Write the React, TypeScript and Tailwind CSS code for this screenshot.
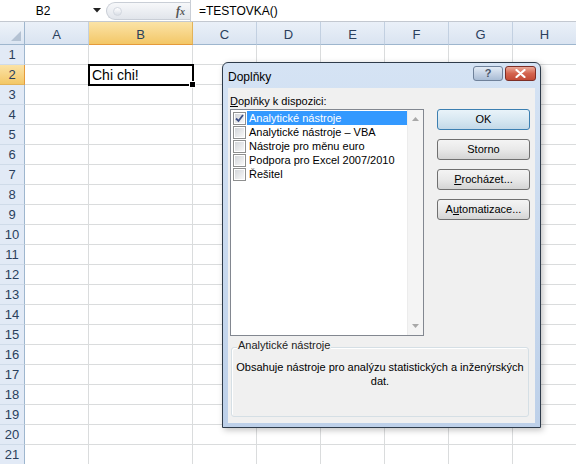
import React from "react";

const columns = [
  { name: "A", w: "w-[64px]" },
  { name: "B", w: "w-[104px]" },
  { name: "C", w: "w-[64px]" },
  { name: "D", w: "w-[64px]" },
  { name: "E", w: "w-[64px]" },
  { name: "F", w: "w-[64px]" },
  { name: "G", w: "w-[64px]" },
  { name: "H", w: "w-[64px]" },
];

const rows = Array.from({ length: 21 }, (_, i) => i + 1);

const addins = [
  { label: "Analytické nástroje", checked: true, selected: true },
  { label: "Analytické nástroje – VBA", checked: false, selected: false },
  { label: "Nástroje pro měnu euro", checked: false, selected: false },
  { label: "Podpora pro Excel 2007/2010", checked: false, selected: false },
  { label: "Řešitel", checked: false, selected: false },
];

const FormulaBar: React.FC = () => (
  <div className="h-[22px] flex items-stretch border-b border-[#c3c8d0] bg-white font-['Liberation_Sans',sans-serif] text-[12px] text-black">
    <div className="w-[86px] flex items-center justify-center">B2</div>
    <div className="w-[20px] flex items-center">
      <svg width="8" height="5" viewBox="0 0 8 5" className="ml-[7px]">
        <path d="M0 0 H8 L4 4.5 Z" fill="#222" />
      </svg>
    </div>
    <div className="mt-[2px] mb-[1px] w-[84px] rounded-l-full border border-r-0 border-[#c9ced6] bg-gradient-to-b from-[#f7f8fa] to-[#e1e5eb] flex items-center">
      <span className="ml-[6px] w-[9px] h-[9px] rounded-full bg-gradient-to-b from-[#ffffff] to-[#d9dee6] border border-[#d2d7df]" />
      <span className="ml-auto mr-[5px] font-['Liberation_Serif',serif] italic font-bold text-[12px] text-[#555]">
        f<span className="text-[10px]">x</span>
      </span>
    </div>
    <div className="flex-1 border-l border-[#c9ced6] flex items-center pl-[8px]">=TESTOVKA()</div>
  </div>
);

const Sheet: React.FC = () => (
  <div className="font-['Liberation_Sans',sans-serif] text-[13px] text-[#2b3f5c]">
    <div className="flex h-[23px]">
      <div className="w-[25px] shrink-0 border-r border-b border-[#9eb6ce] bg-gradient-to-b from-[#eef3f9] to-[#dbe5f2] flex items-end justify-end pr-[3px] pb-[3px]">
        <svg width="10" height="10" viewBox="0 0 10 10">
          <path d="M10 0 V10 H0 Z" fill="#b4c2d3" />
        </svg>
      </div>
      {columns.map((c) => (
        <div
          key={c.name}
          className={`${c.w} shrink-0 flex items-center justify-center pt-[3px] border-r border-b ${
            c.name === "B"
              ? "bg-gradient-to-b from-[#fbe3a6] to-[#f3c766] border-r-[#e2b35a] border-b-[#e59a3a]"
              : "bg-gradient-to-b from-[#eaf0f8] to-[#dae4f1] border-r-[#c2d0e1] border-b-[#9eb6ce]"
          }`}
        >
          {c.name}
        </div>
      ))}
    </div>
    {rows.map((r) => (
      <div key={r} className="flex h-[20px]">
        <div
          className={`w-[25px] shrink-0 flex items-center justify-center border-r border-b ${
            r === 2
              ? "bg-gradient-to-b from-[#fbe3a6] to-[#f3c766] border-r-[#e59a3a] border-b-[#e2b35a]"
              : "bg-[#e2eaf6] border-r-[#9eb6ce] border-b-[#cfdbe9]"
          }`}
        >
          {r}
        </div>
        {columns.map((c) => (
          <div key={c.name} className={`${c.w} shrink-0 border-r border-b border-[#dadcdd] bg-white relative`}>
            {r === 2 && c.name === "B" && (
              <>
                <span className="absolute left-[3px] bottom-[0px] text-[14px] leading-[18px] text-black">Chi chi!</span>
                <div className="absolute z-10 -left-[1px] -top-[1px] w-[106px] h-[22px] border-2 border-black" />
                <div className="absolute z-20 -right-[4px] -bottom-[4px] w-[7px] h-[7px] bg-black border border-white" />
              </>
            )}
          </div>
        ))}
      </div>
    ))}
  </div>
);

const Checkbox: React.FC<{ checked: boolean }> = ({ checked }) => (
  <div className="w-[13px] h-[13px] shrink-0 border border-[#8e8f8f] bg-white p-[1px]">
    <div className="w-full h-full bg-gradient-to-br from-[#d3d6da] to-[#f8f8f8] relative">
      {checked && (
        <svg width="11" height="11" viewBox="0 0 11 11" className="absolute -left-[1px] -top-[1px]">
          <path d="M2 5.5 L4.5 8 L9 2" fill="none" stroke="#3d4f85" strokeWidth="1.8" />
        </svg>
      )}
    </div>
  </div>
);

const Button: React.FC<{ children: React.ReactNode; primary?: boolean }> = ({ children, primary }) => (
  <div
    className={`w-[93px] h-[21px] rounded-[3px] border flex items-center justify-center text-black ${
      primary
        ? "border-[#3c7fb1] bg-gradient-to-b from-[#e9f3f9] via-[#d8e8f2] to-[#c3d9e8]"
        : "border-[#707070] bg-gradient-to-b from-[#f4f4f4] via-[#e9e9e9] to-[#d4d4d4]"
    }`}
  >
    {children}
  </div>
);

const Dialog: React.FC = () => (
  <div className="absolute z-30 left-[222px] top-[62px] w-[319px] h-[366px] rounded-t-[6px] border border-[#2e3b4a] bg-gradient-to-b from-[#d5e3f4] to-[#bdd0e9] flex flex-col px-[5px] pb-[4px] shadow-[2px_2px_6px_rgba(0,0,0,0.25)] font-['Liberation_Sans',sans-serif] text-[11px] text-black">
    <div className="h-[25px] flex items-start shrink-0">
      <span className="pt-[5px] text-[12px]">Doplňky</span>
      <div className="ml-auto -mr-[1px] mt-[3px] flex gap-[2px]">
        <div className="w-[30px] h-[15px] rounded-[3px] border border-[#6f819a] bg-gradient-to-b from-[#e3ebf5] to-[#a9bcd5] flex items-center justify-center text-[11px] font-bold text-[#4a5668] leading-none">
          ?
        </div>
        <div className="w-[31px] h-[15px] rounded-[3px] border border-[#7d2e26] bg-gradient-to-b from-[#eaa999] via-[#d4644f] to-[#c24a36] flex items-center justify-center">
          <svg width="11" height="9" viewBox="0 0 11 9">
            <path d="M1.5 1 L9.5 8 M9.5 1 L1.5 8" stroke="#fff" strokeWidth="2.2" strokeLinecap="round" />
          </svg>
        </div>
      </div>
    </div>
    <div className="flex-1 bg-[#f0f0f0] pl-[2px] pt-[5px] flex flex-col">
      <div className="flex">
        <div className="w-[194px] flex flex-col">
          <div className="h-[16px] leading-[16px]">
            <span className="underline">D</span>oplňky k dispozici:
          </div>
          <div className="h-[227px] border border-[#828790] bg-white flex">
            <div className="flex-1 pt-[1px] pl-[2px] flex flex-col">
              {addins.map((a) => (
                <div key={a.label} className="h-[14px] flex items-center">
                  <Checkbox checked={a.checked} />
                  <span
                    className={`ml-[1px] pl-[2px] leading-[14px] whitespace-nowrap ${
                      a.selected ? "flex-1 bg-[#3399ff] text-white" : ""
                    }`}
                  >
                    {a.label}
                  </span>
                </div>
              ))}
            </div>
            <div className="w-[16px] bg-[#f4f4f4] border-l border-[#ececec] flex flex-col justify-between items-center py-[7px]">
              <svg width="7" height="4" viewBox="0 0 7 4">
                <path d="M0 4 L3.5 0 L7 4 Z" fill="#a8a8a8" />
              </svg>
              <svg width="7" height="4" viewBox="0 0 7 4">
                <path d="M0 0 L3.5 4 L7 0 Z" fill="#a8a8a8" />
              </svg>
            </div>
          </div>
        </div>
        <div className="ml-[13px] pt-[16px] flex flex-col gap-[9px]">
          <Button primary>OK</Button>
          <Button>Storno</Button>
          <Button>
            <span>
              <span className="underline">P</span>rocházet...
            </span>
          </Button>
          <Button>
            <span>
              A<span className="underline">u</span>tomatizace...
            </span>
          </Button>
        </div>
      </div>
      <div className="mt-[11px] ml-[1px] w-[298px] h-[70px] relative border border-[#d5dfe5] rounded-[3px] shadow-[inset_1px_1px_0_#fff]">
        <span className="absolute left-[5px] -top-[10px] bg-[#f0f0f0] px-[1px] leading-[14px] text-[#222]">
          Analytické nástroje
        </span>
        <div className="pt-[12px] text-center leading-[14px] whitespace-nowrap">
          Obsahuje nástroje pro analýzu statistických a inženýrských
          <br />
          dat.
        </div>
      </div>
    </div>
  </div>
);

export default function App() {
  return (
    <div className="relative w-[576px] h-[464px] overflow-hidden bg-white">
      <FormulaBar />
      <Sheet />
      <Dialog />
    </div>
  );
}
